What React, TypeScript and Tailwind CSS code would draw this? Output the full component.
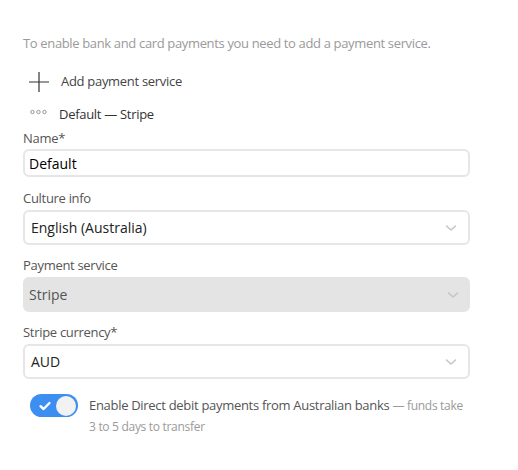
import React from "react";

function Chevron() {
  return (
    <svg width="14" height="14" viewBox="0 0 14 14" fill="none" className="shrink-0">
      <path d="M2.5 5 L7 9 L11.5 5" stroke="#c6c6c6" strokeWidth="1.6" strokeLinecap="round" strokeLinejoin="round" />
    </svg>
  );
}

function Select({ value, disabled }: { value: string; disabled?: boolean }) {
  return (
    <div
      className={
        "flex h-[35px] items-center justify-between rounded-[6px] pl-[6px] pr-[10px] " +
        (disabled ? "bg-[#e4e4e4] text-[#555]" : "border-2 border-[#e6e6e6] bg-white text-[#222]")
      }
    >
      <span className="text-[14px]">{value}</span>
      <Chevron />
    </div>
  );
}

export default function App() {
  return (
    <div
      className="w-[518px] h-[470px] bg-white pl-[23px] pr-[48px] pt-[33px]"
      style={{ fontFamily: '"Open Sans", "Noto Sans", sans-serif' }}
    >
      <p className="text-[13px] leading-[20px] text-[#9a9a9a] tracking-[-0.35px]">
        To enable bank and card payments you need to add a payment service.
      </p>
      <div className="mt-[19px] flex items-center h-[20px]">
        <svg width="20" height="20" viewBox="0 0 20 20" className="ml-[6px]">
          <path d="M10 0 V20 M0 10 H20" stroke="#333" strokeWidth="1.2" />
        </svg>
        <span className="ml-[12px] text-[13px] text-[#444] tracking-[-0.3px]">Add payment service</span>
      </div>
      <div className="mt-[13px] flex items-center h-[20px]">
        <svg width="18" height="8" viewBox="0 0 18 8" className="ml-[7px] -mt-[6px] shrink-0">
          <circle cx="2.5" cy="4" r="1.7" stroke="#8a8a8a" strokeWidth="0.9" fill="none" />
          <circle cx="8.5" cy="4" r="1.7" stroke="#8a8a8a" strokeWidth="0.9" fill="none" />
          <circle cx="14.5" cy="4" r="1.7" stroke="#8a8a8a" strokeWidth="0.9" fill="none" />
        </svg>
        <span className="ml-[11px] text-[13px] text-[#333] tracking-[-0.3px]">Default — Stripe</span>
      </div>
      <div className="mt-[4px] text-[13px] leading-[18px] text-[#555] tracking-[-0.3px]">Name*</div>
      <div className="mt-[2px] flex h-[28px] items-center rounded-[6px] border-2 border-[#e6e6e6] px-[4px]">
        <span className="text-[14px] text-black">Default</span>
      </div>
      <div className="mt-[12px] text-[13px] leading-[18px] text-[#555] tracking-[-0.3px]">Culture info</div>
      <div className="mt-[3px]">
        <Select value="English (Australia)" />
      </div>
      <div className="mt-[11px] text-[13px] leading-[18px] text-[#555] tracking-[-0.3px]">Payment service</div>
      <div className="mt-[3px]">
        <Select value="Stripe" disabled />
      </div>
      <div className="mt-[11px] text-[13px] leading-[18px] text-[#555] tracking-[-0.3px]">Stripe currency*</div>
      <div className="mt-[3px]">
        <Select value="AUD" />
      </div>
      <div className="mt-[15px] flex items-start">
        <div className="ml-[7px] flex h-[23px] w-[48px] shrink-0 items-center justify-between rounded-full bg-[#3c8ef0] px-[2px]">
          <svg width="14" height="14" viewBox="0 0 14 14" className="ml-[6px]">
            <path d="M2.5 7.2 L5.6 10 L11.5 4" stroke="white" strokeWidth="2.4" fill="none" strokeLinecap="round" strokeLinejoin="round" />
          </svg>
          <div className="h-[20px] w-[20px] rounded-full bg-[#f2f2f2]" />
        </div>
        <p className="ml-[11px] mt-[1px] text-[13px] leading-[20px] text-[#555] tracking-[-0.3px]">
          Enable Direct debit payments from Australian banks{" "}
          <span className="text-[12px] leading-[20px] text-[#9a9a9a]">— funds take 3 to 5 days to transfer</span>
        </p>
      </div>
    </div>
  );
}
